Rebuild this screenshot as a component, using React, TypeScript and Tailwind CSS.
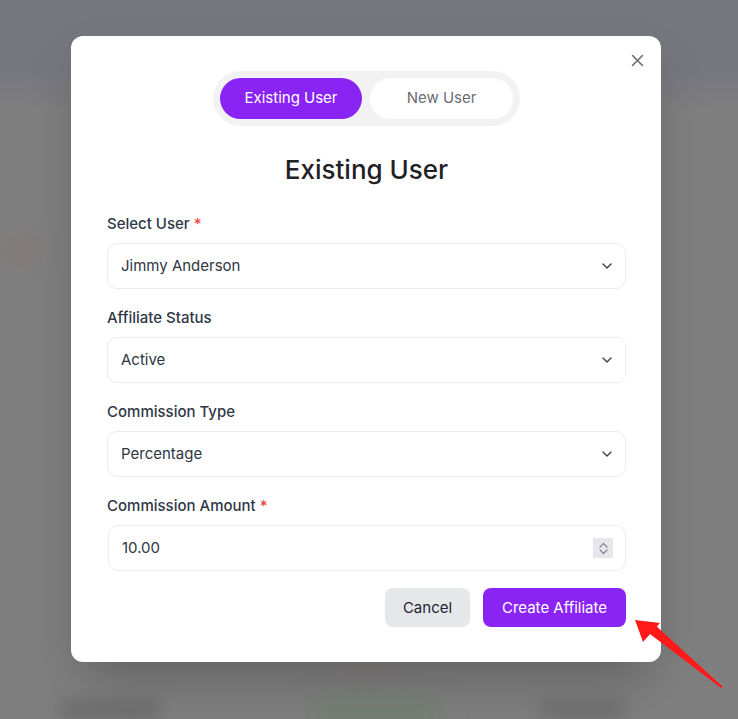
import React from "react";

const Chevron = () => (
  <svg width="16" height="16" viewBox="0 0 24 24" fill="none" stroke="#374151" strokeWidth="2" strokeLinecap="round" strokeLinejoin="round">
    <path d="M6 9l6 6 6-6" />
  </svg>
);

function SelectField({ label, value, required }: { label: string; value: string; required?: boolean }) {
  return (
    <div className="flex flex-col">
      <label className="h-5 pt-px text-[15px] leading-5 font-medium text-[#2f3747]">
        {label}
        {required && <span className="text-[#ef4444]"> *</span>}
      </label>
      <div className="mt-[10px] h-[46px] rounded-[10px] border border-[#ebebf7] bg-white flex items-center justify-between pl-[13px] pr-[10px]">
        <span className="text-[15px] text-[#2f3542]">{value}</span>
        <Chevron />
      </div>
    </div>
  );
}

export default function App() {
  return (
    <div
      className="relative w-[738px] h-[719px] overflow-hidden bg-[#7f7f7f]"
      style={{ fontFamily: "Inter, 'Noto Sans', sans-serif" }}
    >
      {/* blurred page behind */}
      <div className="absolute inset-x-0 top-0 h-[80px] bg-[#76767e]" />
      <div className="absolute inset-x-0 top-[70px] h-[40px] bg-gradient-to-b from-[#76767e] to-[#7f7f7f]" />
      <div className="absolute left-[0px] top-[240px] w-[40px] h-[20px] rounded-full bg-[#8a7272] blur-md opacity-60" />
      <div className="absolute left-[60px] top-[700px] w-[100px] h-[20px] rounded bg-[#6e6e6e] blur-sm" />
      <div className="absolute left-[310px] top-[705px] w-[130px] h-[20px] rounded bg-[#6f7f6f] blur-md" />
      <div className="absolute left-[540px] top-[700px] w-[85px] h-[20px] rounded bg-[#707070] blur-sm" />
      <div className="absolute left-[330px] top-[660px] w-[70px] h-[10px] rounded bg-[#8a7a7a] blur-md opacity-70" />

      {/* modal */}
      <div className="relative ml-[71px] mt-[36px] w-[590px] h-[626px] rounded-xl bg-white pl-9 pr-[35px] pt-[35px] shadow-2xl">
        <button className="absolute right-[17px] top-[17px] w-[14px] h-[14px] flex items-center justify-center">
          <svg width="13" height="13" viewBox="0 0 13 13" fill="none" stroke="#6b6b72" strokeWidth="1.6" strokeLinecap="round">
            <path d="M1.5 1.5l10 10M11.5 1.5l-10 10" />
          </svg>
        </button>

        <div className="flex justify-center">
          <div className="flex gap-2 rounded-full bg-[#f2f2f2] p-[7px]">
            <div className="w-[142px] h-[41px] rounded-full bg-[#8a24f5] flex items-center justify-center text-[15px] text-white">
              Existing User
            </div>
            <div className="w-[143px] h-[41px] rounded-full bg-white flex items-center justify-center text-[15px] text-[#6b6b73]">
              New User
            </div>
          </div>
        </div>

        <h2 className="mt-[28px] text-center text-[26px] leading-8 font-medium text-[#1f2226]">Existing User</h2>

        <div className="mt-[27px] flex flex-col gap-[18px]">
          <SelectField label="Select User" value="Jimmy Anderson" required />
          <SelectField label="Affiliate Status" value="Active" />
          <SelectField label="Commission Type" value="Percentage" />
          <div className="flex flex-col">
            <label className="h-5 pt-px text-[15px] leading-5 font-medium text-[#2f3747]">
              Commission Amount<span className="text-[#ef4444]"> *</span>
            </label>
            <div className="mt-[10px] ml-px h-[46px] rounded-[10px] border border-[#ebebf7] bg-white flex items-center justify-between pl-[13px] pr-[12px]">
              <span className="text-[15px] text-[#2f3542]">10.00</span>
              <div className="w-[20px] h-[20px] bg-[#e6e6ec] flex flex-col items-center justify-center gap-[1px]">
                <svg width="9" height="6" viewBox="0 0 9 6" fill="none" stroke="#8b8b94" strokeWidth="1.3" strokeLinecap="round" strokeLinejoin="round">
                  <path d="M1 5l3.5-3.5L8 5" />
                </svg>
                <svg width="9" height="6" viewBox="0 0 9 6" fill="none" stroke="#8b8b94" strokeWidth="1.3" strokeLinecap="round" strokeLinejoin="round">
                  <path d="M1 1l3.5 3.5L8 1" />
                </svg>
              </div>
            </div>
          </div>
        </div>

        <div className="mt-[17px] flex justify-end gap-[13px]">
          <button className="w-[85px] h-[39px] rounded-lg bg-[#e5e7eb] pt-px text-[15px] text-[#1f2530]">Cancel</button>
          <button className="w-[143px] h-[39px] rounded-lg bg-[#8a24f5] pt-px text-[15px] text-white">Create Affiliate</button>
        </div>
      </div>

      {/* red arrow */}
      <svg className="absolute left-0 top-0 pointer-events-none" width="738" height="719">
        <polygon points="646,631 654,624 723,687 721,688" fill="#ff1a1a" />
        <polygon points="635,620 660,623 643,642" fill="#ff1a1a" />
      </svg>
    </div>
  );
}
